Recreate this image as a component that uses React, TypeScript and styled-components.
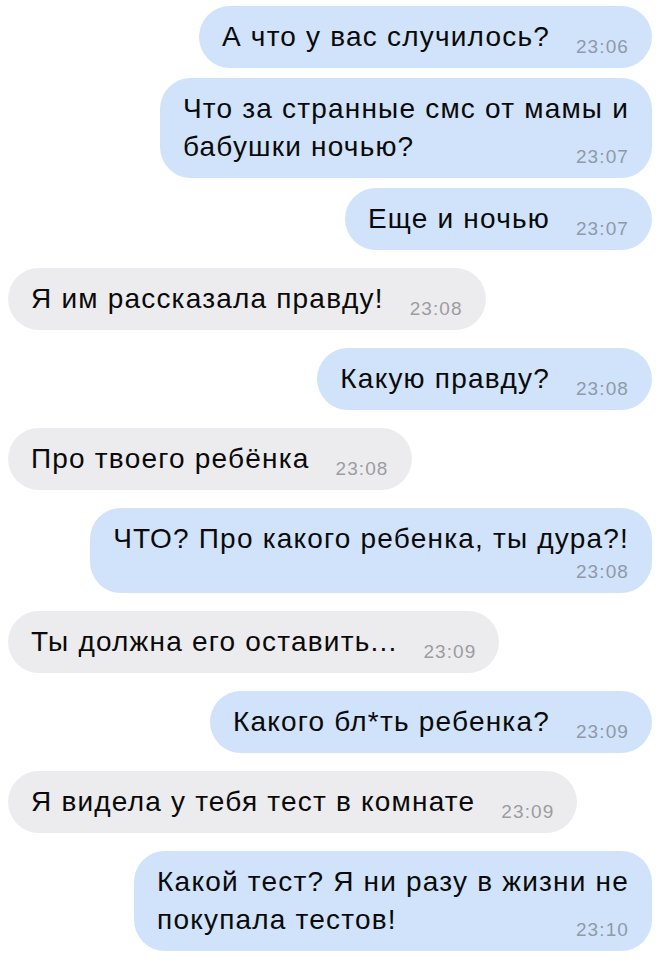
import React from "react";
import styled, { createGlobalStyle } from "styled-components";

const GlobalStyle = createGlobalStyle`
  html, body {
    margin: 0;
    padding: 0;
    background: #ffffff;
  }
  body {
    font-family: "Liberation Sans", Arial, Helvetica, sans-serif;
    -webkit-font-smoothing: antialiased;
  }
`;

type Message = {
  out: boolean;
  lines: string[];
  time: string;
  timeBelow?: boolean;
};

const messages: Message[] = [
  { out: true, lines: ["А что у вас случилось?"], time: "23:06" },
  { out: true, lines: ["Что за странные смс от мамы и", "бабушки ночью?"], time: "23:07" },
  { out: true, lines: ["Еще и ночью"], time: "23:07" },
  { out: false, lines: ["Я им рассказала правду!"], time: "23:08" },
  { out: true, lines: ["Какую правду?"], time: "23:08" },
  { out: false, lines: ["Про твоего ребёнка"], time: "23:08" },
  { out: true, lines: ["ЧТО? Про какого ребенка, ты дура?!"], time: "23:08", timeBelow: true },
  { out: false, lines: ["Ты должна его оставить..."], time: "23:09" },
  { out: true, lines: ["Какого бл*ть ребенка?"], time: "23:09" },
  { out: false, lines: ["Я видела у тебя тест в комнате"], time: "23:09" },
  { out: true, lines: ["Какой тест? Я ни разу в жизни не", "покупала тестов!"], time: "23:10" },
];

const Chat = styled.div`
  width: 668px;
  height: 960px;
  box-sizing: border-box;
  padding: 6px 16px 0 8px;
  display: flex;
  flex-direction: column;
  overflow: hidden;
`;

const Row = styled.div<{ $out: boolean; $gap: number }>`
  display: flex;
  justify-content: ${(p) => (p.$out ? "flex-end" : "flex-start")};
  margin-top: ${(p) => p.$gap}px;
`;

const Bubble = styled.div<{ $out: boolean }>`
  display: flex;
  flex-direction: column;
  box-sizing: border-box;
  padding: 12px 23px 12px 23px;
  border-radius: 31px;
  background: ${(p) => (p.$out ? "#d0e3fb" : "#ececee")};
  color: #0a0a0a;
  font-size: 28px;
  line-height: 38px;
  letter-spacing: 1.2px;
`;

const Line = styled.div`
  white-space: nowrap;
`;

const LastLine = styled.div`
  display: flex;
  align-items: flex-end;
  justify-content: space-between;
  gap: 26px;
  white-space: nowrap;
`;

const Time = styled.span<{ $out: boolean }>`
  font-size: 19px;
  line-height: 19px;
  letter-spacing: 1.1px;
  color: ${(p) => (p.$out ? "#8f9aa8" : "#9c9ca1")};
  white-space: nowrap;
`;

const TimeRow = styled.div`
  display: flex;
  justify-content: flex-end;
  margin-top: 4px;
`;

export default function App() {
  return (
    <>
      <GlobalStyle />
      <Chat>
        {messages.map((m, i) => {
          const prev = messages[i - 1];
          const gap = i === 0 ? 0 : prev.out === m.out ? 10 : 18;
          const head = m.lines.slice(0, -1);
          const last = m.lines[m.lines.length - 1];
          return (
            <Row key={i} $out={m.out} $gap={gap}>
              <Bubble $out={m.out}>
                {head.map((l, j) => (
                  <Line key={j}>{l}</Line>
                ))}
                {m.timeBelow ? (
                  <>
                    <Line>{last}</Line>
                    <TimeRow>
                      <Time $out={m.out}>{m.time}</Time>
                    </TimeRow>
                  </>
                ) : (
                  <LastLine>
                    <span>{last}</span>
                    <Time $out={m.out}>{m.time}</Time>
                  </LastLine>
                )}
              </Bubble>
            </Row>
          );
        })}
      </Chat>
    </>
  );
}
